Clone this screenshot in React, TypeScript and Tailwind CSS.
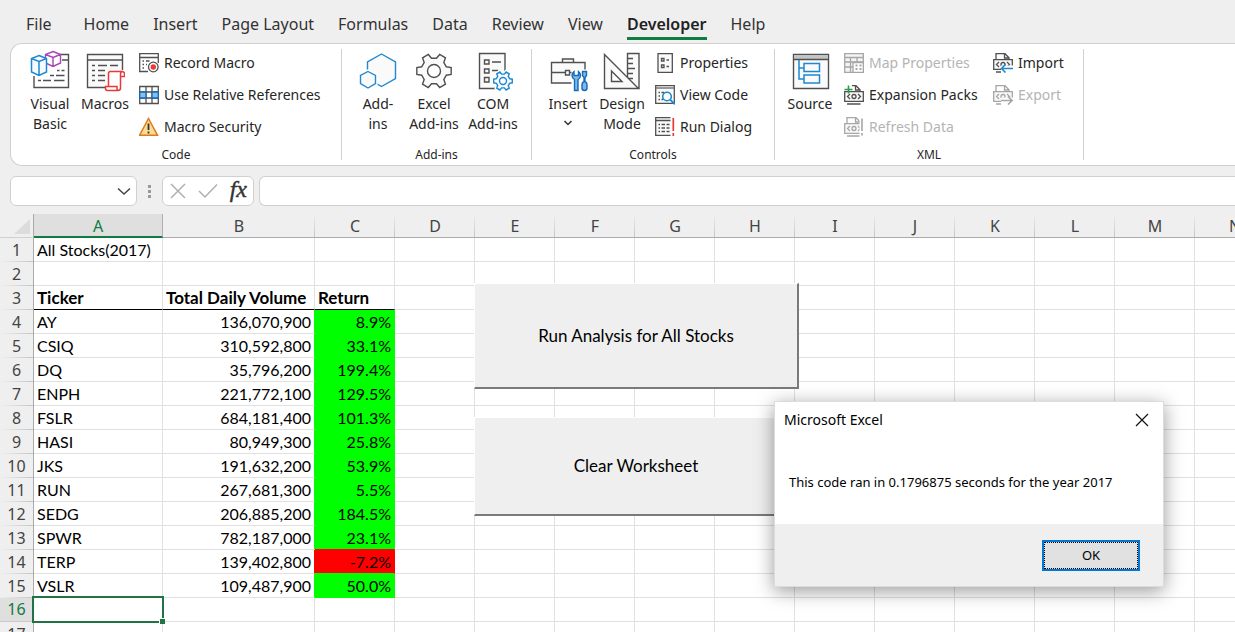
import React from "react";

const LINE = "#505050";
const BLUE = "#1e88d2";
const GREY = "#a6a6a6";

function gearPath(cx: number, cy: number, outer: number, root: number) {
  const pt = (r: number, deg: number) => {
    const a = (deg * Math.PI) / 180;
    return `${(cx + r * Math.cos(a)).toFixed(2)} ${(cy + r * Math.sin(a)).toFixed(2)}`;
  };
  const points: string[] = [];
  for (let i = 0; i < 6; i++) {
    const a = i * 60;
    points.push(pt(root, a - 19), pt(outer, a - 11), pt(outer, a + 11), pt(root, a + 19));
  }
  return `M${points.join("L")}Z`;
}

type IconProps = { box: string; children: React.ReactNode };

function BigSvg({ box, children }: IconProps) {
  return (
    <svg viewBox={box} className="h-11 w-10 shrink-0" fill="none" stroke={LINE} strokeWidth="1.4" aria-hidden="true">
      {children}
    </svg>
  );
}

function SmallSvg({ box, children }: IconProps) {
  return (
    <svg viewBox={box} className="size-5 shrink-0" fill="none" stroke={LINE} strokeWidth="1.3" aria-hidden="true">
      {children}
    </svg>
  );
}

const VisualBasicIcon = () => (
  <BigSvg box="30 50 40 44">
    <path d="M34 76V87.5H68.5V54.5H60M62 60H68.5" fill="none" />
    <path d="M57 70.5H59.500M61.500 70.5H64.500M50 75.500H54M56 75.500H64.500M38 80.500H41M43 80.500H51M54 80.500H64.500M53 65.500H55" />
    <path d="M53 51.500L60.500 54.500V63L53 66.500L45.500 63V54.500ZM45.500 54.500L53 57.500L60.500 54.500M53 57.500V66.500" fill="#fff" stroke="#a846b4" />
    <path d="M39 55.500L46.500 58.500V72L39 75.500L31.500 72V58.500ZM31.500 58.500L39 61.500L46.500 58.500M39 61.500V75.500" fill="#f4fafe" stroke={BLUE} strokeWidth="1.500" />
  </BigSvg>
);

const MacrosIcon = () => (
  <BigSvg box="85 50 40 44">
    <path d="M105 87.500H87.500V54.500H122.500V70M87.500 60H122.500" fill="#fafafa" />
    <path d="M92 65.500H95M98 65.500H107M110 65.500H118M92 70.500H95M98 70.500H105M92 75.500H95M98 75.500H105M92 80.500H95M98 80.500H105" />
    <path d="M108.500 86.500V73.500Q108.500 71.500 110.500 71.500H122Q124.500 71.500 124.500 74V76.500H120.500V88Q120.500 90.500 118 90.500H107.500Q105.500 90.500 105.500 88.500V86.500H117V88.500Q117 90.500 118.500 90.500M120.500 76.500V74Q120.500 71.500 122.500 71.500" fill="#fff" stroke="#e83a3a" strokeWidth="1.500" />
  </BigSvg>
);

const AddInsIcon = () => (
  <BigSvg box="358 50 40 44">
    <path d="M381.500 54L395.500 62V78.500L381.500 86.500L367.500 78.500V62Z" fill="#fafafa" stroke={BLUE} />
    <path d="M368 71.500L375.500 75.500V83.500L368 88L360.500 83.500V75.500Z" fill="#fafafa" stroke="#fff" strokeWidth="4" />
    <path d="M368 71.500L375.500 75.500V83.500L368 88L360.500 83.500V75.500Z" fill="#fafafa" stroke={BLUE} />
  </BigSvg>
);

const ExcelAddInsIcon = () => (
  <BigSvg box="414 50 40 44">
    <path d={gearPath(434, 71, 17.5, 13)} fill="#fafafa" />
    <circle cx="434" cy="71" r="6.500" fill="#fff" />
  </BigSvg>
);

const ComAddInsIcon = () => (
  <BigSvg box="473 50 40 44">
    <path d="M479.500 53.500H505V88.500H479.500Z" fill="#fafafa" />
    <path d="M484.500 60H489V64H484.500ZM484.500 69H489V73H484.500ZM484.500 77.500H489V82H484.500ZM492 62H501M492 70.500H498" />
    <path d={gearPath(503, 81, 9.5, 7)} fill="#fff" stroke="#fff" strokeWidth="4" />
    <path d={gearPath(503, 81, 9.5, 7)} fill="#f4fafe" stroke={BLUE} />
    <circle cx="503" cy="81" r="3.500" fill="#fff" stroke={BLUE} />
  </BigSvg>
);

const InsertIcon = () => (
  <BigSvg box="548 50 40 44">
    <path d="M562.500 62.500V59H573.500V62.500M551.500 62.500H585V83H551.500ZM551.500 72.500H585" fill="#fafafa" />
    <path d="M565.500 70.500H569.500V75H565.500Z" fill="#fff" />
    <path d="M571.500 69.500H589V92H571.500Z" fill="#fff" stroke="none" />
    <path d="M574 71.500V75.500H578.500V71.500Q580.500 73 580.500 75.500Q580.500 78 578 79.500V90.500H574.500V79.500Q572 78 572 75.500Q572 73 574 71.500Z" fill="#7db8e8" stroke="#1668b8" />
    <path d="M582.500 71.500H586.500V75.500L585 77.500V81.500Q587 82.500 587 84.500V88Q587 90.500 584.500 90.500Q582 90.500 582 88V84.500Q582 82.500 584 81.500V77.500L582.500 75.500Z" fill="#7db8e8" stroke="#1668b8" />
  </BigSvg>
);

const DesignModeIcon = () => (
  <BigSvg box="602 50 40 44">
    <path d="M627.500 53.500H639V88H627.500Z" fill="#fafafa" />
    <path d="M627.500 58.500H633M627.500 63.500H633M627.500 68.500H635M627.500 73.500H633M627.500 78.500H633" />
    <path d="M604.500 54.500L638.500 88.500H604.500Z" fill="#fafafa" />
    <path d="M611.500 71L622 81.500H611.500Z" fill="#fff" />
  </BigSvg>
);

const SourceIcon = () => (
  <BigSvg box="790 50 40 44">
    <path d="M793.500 54.500H828.500V88.500H793.500Z" fill="#fafafa" />
    <path d="M794 55H828V59.500H794Z" fill="#c4c4c4" stroke="none" />
    <path d="M793.500 59.500H828.500" />
    <path d="M799 60V79H804M799 68H804M804 63.500H819.500V71.500H804ZM804 75H819.500V83H804Z" stroke={BLUE} strokeWidth="1.500" />
  </BigSvg>
);

const RecordMacroIcon = () => (
  <SmallSvg box="139 52 20 20">
    <path d="M148 70.500H139.700V52.700H158.300V62M139.700 56.500H158.300" />
    <path d="M142.500 60H144M146 60H149.500M142.500 63.500H144M146 63.500H147M142.500 67H144" />
    <circle cx="153.300" cy="66" r="4.800" fill="#fff" />
    <circle cx="153.300" cy="66" r="2.700" fill="#e83a3a" stroke="none" />
  </SmallSvg>
);

const RelativeIcon = () => (
  <SmallSvg box="139 84 20 20">
    <path d="M139.700 85.500H158.300V102.500H139.700Z" fill="#fff" />
    <path d="M146 85.500V102.500M152 85.500V102.500M139.700 91H158.300M139.700 97H158.300" />
    <path d="M139.700 91H146V97H139.700ZM152 91H158.300V97H152Z" fill="#83beec" stroke="#1668b8" />
  </SmallSvg>
);

const SecurityIcon = () => (
  <SmallSvg box="139 116 20 20">
    <path d="M148.500 117.500L157.500 134.300H139.500Z" fill="#fbdc94" stroke="#e07b1c" strokeWidth="1.500" />
    <path d="M148.500 122.500V129M148.500 130.500V132.500" stroke="#333" strokeWidth="1.800" />
  </SmallSvg>
);

const PropertiesIcon = () => (
  <SmallSvg box="655 52 20 20">
    <path d="M658 52.700H672.300V71.300H658Z" fill="#fafafa" />
    <path d="M661.500 57.500H664V60H661.500ZM661.500 64H664V66.500H661.500ZM666.500 59H669M666.500 65.500H669" />
  </SmallSvg>
);

const ViewCodeIcon = () => (
  <SmallSvg box="655 84 20 20">
    <path d="M655.700 84.700H674.300V102.300H655.700Z" fill="#fafafa" />
    <path d="M655.700 87H674.300" strokeWidth="1.500" stroke="#777" />
    <path d="M658.500 91.500H660M661.500 91.500H664M658.500 95H660M658.500 98.500H660M661.500 98.500H663" />
    <circle cx="667" cy="95.500" r="4.300" fill="#fff" stroke={BLUE} strokeWidth="1.600" />
    <path d="M670.200 98.700L674.800 103.300" stroke={BLUE} strokeWidth="1.800" />
  </SmallSvg>
);

const RunDialogIcon = () => (
  <SmallSvg box="655 116 20 20">
    <path d="M670.500 116.700H655.700V134.300H670.500M655.700 119.500H670.500" fill="#fafafa" />
    <path d="M658.500 123.500H660M661.500 123.500H665M666.500 123.500H669.500M658.500 127H660M661.500 127H665M666.500 127H669.500M658.500 130.500H660M661.500 130.500H665M666.500 130.500H669.500" />
    <path d="M673.300 117V130M673.300 132V135" stroke="#e83a3a" strokeWidth="1.700" />
  </SmallSvg>
);

const MapPropertiesIcon = () => (
  <SmallSvg box="844 52 20 20">
    <g stroke={GREY}>
      <path d="M844.700 52.700H863.300V71.300H844.700Z" fill="#f4f4f4" />
      <path d="M844.700 56.500H863.300M844.700 61H863.300M844.700 66H853M850.500 56.500V71.300M857 56.500V61" />
      <path d="M853 61.500H863.300V71.300H853Z" fill="#fff" />
      <path d="M855.500 64.500H857.500M859.500 64.500H861.500M855.500 68H857.500M859.500 68H861.500" strokeWidth="2" />
    </g>
  </SmallSvg>
);

/* Page outline with a code band; shared by the XML commands. */
function XmlPage({ stroke = LINE }: { stroke?: string }) {
  return (
    <g stroke={stroke}>
      <path d="M3 6.500V.7H12L16 4.700V6.500M11.500 .7V5H16" fill="#fff" />
      <path d="M.7 6.700H19.300V16.300H.7Z" fill="#f8f8f8" />
      <path d="M6 9L3.500 11.500L6 14M14 9L16.500 11.500L14 14" />
      <circle cx="10" cy="11.500" r="2" />
      <path d="M3 19H16.500" strokeWidth="1.600" />
    </g>
  );
}

const ExpansionIcon = () => (
  <SmallSvg box="0 0 20 20">
    <XmlPage />
    <path d="M0 0H8V6H0Z" fill="#fff" stroke="none" />
    <path d="M4.500 .5V8.500M.5 4.500H8.500" stroke="#2a9d4a" strokeWidth="1.600" />
  </SmallSvg>
);

const RefreshIcon = () => (
  <SmallSvg box="0 0 20 20">
    <XmlPage stroke={GREY} />
    <path d="M15.500 .5H20V20H15.500Z" fill="#fff" stroke="none" />
    <path d="M18 1.500V14M18 16V18.500" stroke={GREY} strokeWidth="1.600" />
  </SmallSvg>
);

const ImportIcon = () => (
  <SmallSvg box="0 0 20 20">
    <XmlPage />
    <path d="M8 12.500H20V20H8Z" fill="#fff" stroke="none" />
    <path d="M12.500 11.500L8.500 15.500L12.500 19.500M8.500 15.500H20" stroke={BLUE} strokeWidth="1.600" />
  </SmallSvg>
);

const ExportIcon = () => (
  <SmallSvg box="0 0 20 20">
    <XmlPage stroke={GREY} />
    <path d="M8 12.500H20V20H8Z" fill="#fff" stroke="none" />
    <path d="M15 11.500L19 15.500L15 19.500M19 15.500H8" stroke={GREY} strokeWidth="1.600" />
  </SmallSvg>
);

const tabs = ["Home", "Insert", "Page Layout", "Formulas", "Data", "Review", "View", "Developer", "Help"];

function Tab({ name }: { name: string }) {
  const active = name === "Developer";
  return (
    <button
      type="button"
      role="tab"
      aria-selected={active}
      className={
        active
          ? "h-[31px] border-b-3 border-[#107c41] pt-[2px] text-base leading-[26px] font-semibold text-[#222]"
          : "h-[31px] border-b-3 border-transparent pt-[2px] text-base leading-[26px] text-[#333]"
      }
    >
      {name}
    </button>
  );
}

function BigButton({ icon, width, children }: { icon: React.ReactNode; width: string; children: React.ReactNode }) {
  return (
    <button type="button" className={`flex shrink-0 flex-col items-center pt-[3px] text-sm leading-5 whitespace-nowrap ${width}`}>
      {icon}
      {children}
    </button>
  );
}

function SmallButton({ icon, label, disabled = false }: { icon: React.ReactNode; label: string; disabled?: boolean }) {
  return (
    <button
      type="button"
      disabled={disabled}
      className="flex h-8 items-center gap-[5px] text-sm whitespace-nowrap disabled:text-[#b4b4b4]"
    >
      {icon}
      {label}
    </button>
  );
}

type GroupProps = { label: string; width: string; inset?: string; children: React.ReactNode };

function Group({ label, width, inset = "pl-2", children }: GroupProps) {
  return (
    <section aria-label={label} className={`my-[5px] flex shrink-0 flex-col border-r border-[#d0d0d0] ${width}`}>
      <div className={`-mt-[2px] flex h-24 shrink-0 items-start ${inset}`}>{children}</div>
      <div className="pt-1 text-center text-xs leading-4">{label}</div>
    </section>
  );
}

function Ribbon() {
  return (
    <div className="ml-[10px] flex h-[123px] shrink-0 overflow-hidden rounded-l-xl border border-r-0 border-[#d0d0d0] bg-white text-[#262626]">
      <Group label="Code" width="w-[331px]" inset="pl-3">
        <BigButton icon={<VisualBasicIcon />} width="w-[54px]">
          <span>Visual<br />Basic</span>
        </BigButton>
        <BigButton icon={<MacrosIcon />} width="w-14">
          <span>Macros</span>
        </BigButton>
        <div className="pl-[6px]">
          <SmallButton icon={<RecordMacroIcon />} label="Record Macro" />
          <SmallButton icon={<RelativeIcon />} label="Use Relative References" />
          <SmallButton icon={<SecurityIcon />} label="Macro Security" />
        </div>
      </Group>
      <Group label="Add-ins" width="w-[190px]">
        <BigButton icon={<AddInsIcon />} width="w-14">
          <span>Add-<br />ins</span>
        </BigButton>
        <BigButton icon={<ExcelAddInsIcon />} width="w-14">
          <span>Excel<br />Add-ins</span>
        </BigButton>
        <BigButton icon={<ComAddInsIcon />} width="w-[62px]">
          <span>COM<br />Add-ins</span>
        </BigButton>
      </Group>
      <Group label="Controls" width="w-[243px]">
        <BigButton icon={<InsertIcon />} width="w-14">
          <span>Insert</span>
          <svg viewBox="0 0 10 20" className="h-5 w-[10px]" fill="none" stroke="#333" strokeWidth="1.500" aria-hidden="true">
            <path d="M1.500 7L5 10.500L8.500 7" />
          </svg>
        </BigButton>
        <BigButton icon={<DesignModeIcon />} width="w-[52px]">
          <span>Design<br />Mode</span>
        </BigButton>
        <div className="pl-[7px]">
          <SmallButton icon={<PropertiesIcon />} label="Properties" />
          <SmallButton icon={<ViewCodeIcon />} label="View Code" />
          <SmallButton icon={<RunDialogIcon />} label="Run Dialog" />
        </div>
      </Group>
      <Group label="XML" width="w-[309px]">
        <BigButton icon={<SourceIcon />} width="w-[54px]">
          <span>Source</span>
        </BigButton>
        <div className="w-[156px] pl-[7px]">
          <SmallButton icon={<MapPropertiesIcon />} label="Map Properties" disabled />
          <SmallButton icon={<ExpansionIcon />} label="Expansion Packs" />
          <SmallButton icon={<RefreshIcon />} label="Refresh Data" disabled />
        </div>
        <div>
          <SmallButton icon={<ImportIcon />} label="Import" />
          <SmallButton icon={<ExportIcon />} label="Export" disabled />
        </div>
      </Group>
    </div>
  );
}

function FormulaBar() {
  return (
    <div className="mt-[10px] mb-2 ml-[10px] flex h-[30px] shrink-0">
      <div className="flex w-[127px] items-center rounded-md border border-[#d0d0d0] bg-white pr-1">
        <input aria-label="Name box" className="min-w-0 flex-1 bg-transparent px-2 text-sm outline-none" />
        <button type="button" aria-label="Open name list">
          <svg viewBox="0 0 16 16" className="size-4" fill="none" stroke="#444" strokeWidth="1.500">
            <path d="M2 5.500L8 11L14 5.500" />
          </svg>
        </button>
      </div>
      <div className="flex w-[25px] flex-col items-center justify-center gap-[2px]">
        <i className="size-[3px] bg-[#999]" />
        <i className="size-[3px] bg-[#999]" />
        <i className="size-[3px] bg-[#999]" />
      </div>
      <div className="flex w-[92px] items-center justify-between rounded-md border border-[#d0d0d0] bg-white pr-[6px] pl-[7px]">
        <button type="button" aria-label="Cancel">
          <svg viewBox="0 0 16 16" className="size-4" fill="none" stroke="#b0b0b0" strokeWidth="1.500">
            <path d="M1 1L15 15M15 1L1 15" />
          </svg>
        </button>
        <button type="button" aria-label="Enter">
          <svg viewBox="0 0 20 16" className="h-4 w-5" fill="none" stroke="#b0b0b0" strokeWidth="1.500">
            <path d="M1 8L7 14L19 1.500" />
          </svg>
        </button>
        <button
          type="button"
          aria-label="Insert function"
          className="pb-1 font-['Liberation_Serif',serif] text-2xl leading-6 text-[#333] italic [-webkit-text-stroke:0.4px_#333]"
        >
          fx
        </button>
      </div>
      <input
        aria-label="Formula"
        className="ml-[5px] min-w-0 flex-1 rounded-l-md border border-r-0 border-[#d0d0d0] bg-white px-2 text-sm outline-none"
      />
    </div>
  );
}

const columns = ["A", "B", "C", "D", "E", "F", "G", "H", "I", "J", "K", "L", "M", "N"];

const rows: string[][] = [
  ["All Stocks(2017)", "", ""],
  ["", "", ""],
  ["Ticker", "Total Daily Volume", "Return"],
  ["AY", "136,070,900", "8.9%"],
  ["CSIQ", "310,592,800", "33.1%"],
  ["DQ", "35,796,200", "199.4%"],
  ["ENPH", "221,772,100", "129.5%"],
  ["FSLR", "684,181,400", "101.3%"],
  ["HASI", "80,949,300", "25.8%"],
  ["JKS", "191,632,200", "53.9%"],
  ["RUN", "267,681,300", "5.5%"],
  ["SEDG", "206,885,200", "184.5%"],
  ["SPWR", "782,187,000", "23.1%"],
  ["TERP", "139,402,800", "-7.2%"],
  ["VSLR", "109,487,900", "50.0%"],
  ["", "", ""],
  ["", "", ""],
];

function cellClass(row: number, col: number) {
  const base = "relative h-6 border-r border-b p-0 px-[3px] leading-[23px] whitespace-nowrap ";
  if (row === 3) {
    return base + (col < 3 ? "border-r-[#e0e0e0] border-b-black text-left text-[17px] font-bold" : "border-[#e0e0e0]");
  }
  if (row > 3 && row < 16 && col === 2) {
    if (row === 14) return base + "border-r-[#ff0000] border-b-[#00ff00] bg-[#ff0000] text-right";
    if (row === 13) return base + "border-r-[#00ff00] border-b-[#ff0000] bg-[#00ff00] text-right";
    return base + "border-[#00ff00] bg-[#00ff00] text-right";
  }
  if (row > 3 && row < 16 && col === 1) {
    if (row === 14) return base + "border-r-[#ff0000] border-b-[#e0e0e0] text-right";
    return base + "border-r-[#00ff00] border-b-[#e0e0e0] text-right";
  }
  return base + "border-[#e0e0e0]";
}

function Sheet() {
  return (
    <div className="relative min-h-0 flex-1 overflow-hidden">
      <table className="w-[1275px] table-fixed border-separate border-spacing-0 bg-white font-['Lato',sans-serif] text-base text-black">
        <colgroup>
          <col className="w-[34px]" />
          <col className="w-[129px]" />
          <col className="w-[152px]" />
          {columns.slice(2).map((c) => (
            <col key={c} className="w-20" />
          ))}
        </colgroup>
        <thead className="font-['Noto_Sans',sans-serif] text-[#444]">
          <tr>
            <th aria-label="Select all" className="h-6 border-r border-b border-r-[#ababab] border-b-[#d0d0d0] bg-[#efefef] p-0">
              <svg viewBox="0 0 33 23" className="block h-[23px] w-[33px]" aria-hidden="true">
                <path d="M30 5V20H14Z" fill="#dcdcdc" />
              </svg>
            </th>
            {columns.map((c) => (
              <th
                key={c}
                scope="col"
                className={
                  c === "A"
                    ? "h-6 border-r border-b-2 border-r-[#b0b0b0] border-b-[#107c41] bg-[#dfdfdf] p-0 pt-[2px] leading-5 font-normal text-[#107c41]"
                    : "h-6 border-b border-[#ababab] bg-[#efefef] bg-[linear-gradient(to_bottom,#efefef,#c4c4c4)] bg-[length:1px_100%] bg-right bg-no-repeat p-0 pt-px leading-[22px] font-normal"
                }
              >
                {c}
              </th>
            ))}
          </tr>
        </thead>
        <tbody>
          {rows.map((data, i) => {
            const row = i + 1;
            return (
              <tr key={row}>
                <th
                  scope="row"
                  className={
                    row === 16
                      ? "h-6 border-r border-b border-r-[#ababab] border-b-[#c8c8c8] bg-[#dfdfdf] p-0 font-['Noto_Sans',sans-serif] leading-[23px] font-normal text-[#107c41]"
                      : "h-6 border-r border-[#ababab] bg-[#efefef] bg-[linear-gradient(to_right,#efefef,#c4c4c4)] bg-[length:100%_1px] bg-bottom bg-no-repeat p-0 font-['Noto_Sans',sans-serif] leading-6 font-normal text-[#444]"
                  }
                >
                  {row}
                </th>
                {columns.map((c, col) => (
                  <td key={c} className={cellClass(row, col)}>
                    {data[col]}
                    {row === 16 && col === 0 && (
                      <span className="absolute -inset-[2px] z-10 border-2 border-[#217346]">
                        <i className="absolute -right-[3px] -bottom-[3px] size-[6px] border-t border-l border-white bg-[#217346]" />
                      </span>
                    )}
                  </td>
                ))}
              </tr>
            );
          })}
        </tbody>
      </table>
      <button
        type="button"
        className="absolute top-[69px] left-[474px] h-[106px] w-[325px] border-t border-r-2 border-b-2 border-l border-t-white border-r-[#7a7a7a] border-b-[#7a7a7a] border-l-white bg-[#efefef] font-['Lato',sans-serif] text-[17px] text-black"
      >
        Run Analysis for All Stocks
      </button>
      <button
        type="button"
        className="absolute top-[203px] left-[474px] h-[99px] w-[325px] border-t border-r-2 border-b-2 border-l border-t-white border-r-[#7a7a7a] border-b-[#7a7a7a] border-l-white bg-[#efefef] font-['Lato',sans-serif] text-[17px] text-black"
      >
        Clear Worksheet
      </button>
    </div>
  );
}

function MessageBox() {
  return (
    <div
      role="dialog"
      aria-label="Microsoft Excel"
      className="absolute top-[401px] left-[774px] z-20 w-[390px] border border-[#dcdcdc] bg-white text-black shadow-[0_4px_18px_rgba(0,0,0,0.4)]"
    >
      <div className="flex h-9 items-center justify-between pr-[14px] pl-[9px] text-sm">
        <span>Microsoft Excel</span>
        <button type="button" aria-label="Close">
          <svg viewBox="0 0 14 14" className="size-[14px]" fill="none" stroke="#111" strokeWidth="1.200">
            <path d="M1 1L13 13M13 1L1 13" />
          </svg>
        </button>
      </div>
      <p className="px-[14px] pt-[34px] pb-8 text-[13px] leading-5 whitespace-nowrap">
        This code ran in 0.1796875 seconds for the year 2017
      </p>
      <div className="flex h-[62px] items-center justify-end bg-[#efefef] pr-[23px]">
        <button type="button" className="h-[31px] w-[98px] border-2 border-[#0078d7] bg-[#e1e1e1] text-[13px]">
          <span className="flex h-full items-center justify-center border border-dotted border-black pt-px">OK</span>
        </button>
      </div>
    </div>
  );
}

export default function App() {
  return (
    <div className="relative flex h-screen flex-col overflow-hidden bg-[#efefef] font-['Noto_Sans',sans-serif]">
      <nav role="tablist" aria-label="Ribbon tabs" className="flex h-[43px] shrink-0 items-start gap-6 pt-[9px] pl-[26px] whitespace-nowrap">
        <div className="mr-2">
          <Tab name="File" />
        </div>
        {tabs.map((t) => (
          <Tab key={t} name={t} />
        ))}
      </nav>
      <Ribbon />
      <FormulaBar />
      <Sheet />
      <MessageBox />
    </div>
  );
}
